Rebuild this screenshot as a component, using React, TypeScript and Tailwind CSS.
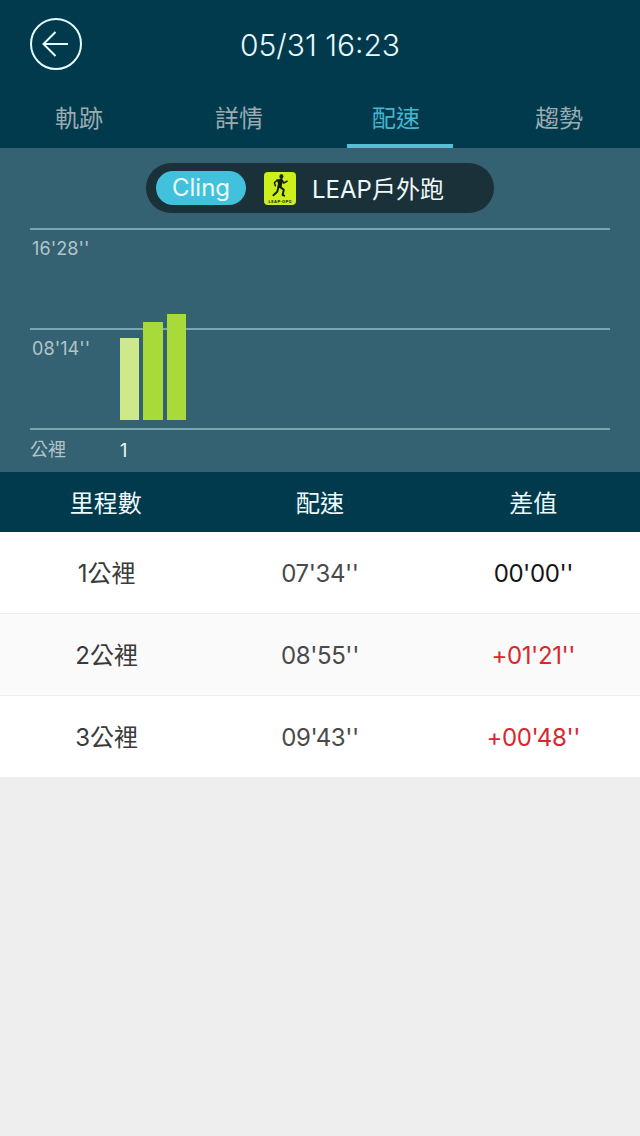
import React, { useState } from "react";

const tabs = [
  { id: "track", label: "軌跡", shift: "pr-0.5" },
  { id: "detail", label: "詳情", shift: "pr-0.5" },
  { id: "pace", label: "配速", shift: "pr-2" },
  { id: "trend", label: "趨勢", shift: "pr-0.5" },
];

const gridLabels = ["16'28''", "08'14''"];

const bars = [
  { height: 82, color: "bg-[#cfe98a]" },
  { height: 98, color: "bg-[#a8db3a]" },
  { height: 106, color: "bg-[#a8db3a]" },
];

const rows = [
  { distance: "1公裡", pace: "07'34''", diff: "00'00''" },
  { distance: "2公裡", pace: "08'55''", diff: "+01'21''" },
  { distance: "3公裡", pace: "09'43''", diff: "+00'48''" },
];

function BackIcon() {
  return (
    <svg width="52" height="52" viewBox="0 0 52 52" fill="none" stroke="#e6fbff" strokeWidth="2">
      <circle cx="26" cy="26" r="25" />
      <path d="M38 26H14M25.5 14L13.5 26l12 12" strokeWidth="2" />
    </svg>
  );
}

function LeapIcon() {
  return (
    <svg width="32" height="33" viewBox="0 0 32 33">
      <rect width="32" height="33" rx="4" fill="#cdf01c" />
      <ellipse cx="17.4" cy="4.4" rx="2" ry="2.5" fill="#15200a" />
      <path d="M12.6 7.4l5-.6 1.6 2-1.6 5.2.8 2.4-5.2-.8.8-4z" fill="#15200a" />
      <g
        fill="none"
        stroke="#15200a"
        strokeLinejoin="round"
        strokeLinecap="round"
      >
        <path d="M13 8.2l-2.6 2.6 1 3M18.2 8.4l1.6 2.6 3.4-1.8" strokeWidth="1.5" />
        <path d="M16.6 15.4l3.2 2.4-1.2 5.2 1.6.6M14.4 15.6l-1.2 4.2-3.8 3.4" strokeWidth="2" />
      </g>
      <text
        x="16"
        y="30.5"
        textAnchor="middle"
        textLength="23"
        className="fill-[#15200a] text-[4px] font-bold"
      >
        LEAP·OPG
      </text>
    </svg>
  );
}

export default function App() {
  const [activeTab, setActiveTab] = useState("pace");

  return (
    <div className="min-h-[1136px] w-[640px] bg-[#eeeeee] font-[Inter,'Noto_Sans_CJK_TC',sans-serif]">
      <header className="h-[148px] bg-[#023a4d]">
        <div className="grid h-[88px] grid-cols-[52px_1fr_52px] items-center px-[30px]">
          <button type="button" aria-label="返回">
            <BackIcon />
          </button>
          <h1 className="pt-0.5 text-center text-[30px] leading-9 font-light text-[#e9fafd]">
            05/31 16:23
          </h1>
        </div>

        <nav className="grid h-[60px] grid-cols-4">
          {tabs.map((tab) => (
            <button
              key={tab.id}
              type="button"
              onClick={() => setActiveTab(tab.id)}
              className={`flex flex-col items-center justify-between text-2xl ${
                activeTab === tab.id ? "text-[#45b4cc]" : "text-[#9aabb1]"
              }`}
            >
              <span className={`pt-[13px] leading-9 ${tab.shift}`}>{tab.label}</span>
              {activeTab === tab.id && <span className="h-1 w-[106px] bg-[#55bfd6]" />}
            </button>
          ))}
        </nav>
      </header>

      <section className="h-[324px] bg-[#346272] px-[30px] pt-[15px]">
        <div className="mx-auto flex h-[50px] w-[348px] items-center rounded-full bg-[#1b3139] pl-2.5 text-[#eefafc]">
          <span className="flex h-[34px] w-[90px] items-center justify-center rounded-full bg-[#41c1dc] text-2xl">
            Cling
          </span>
          <span className="ml-[18px]">
            <LeapIcon />
          </span>
          <span className="ml-4 pt-[3px] text-2xl">LEAP戶外跑</span>
        </div>

        {/* grid lines and bars share one cell */}
        <div className="mt-[15px] grid">
          <div className="col-start-1 row-start-1">
            {gridLabels.map((label) => (
              <div
                key={label}
                className="h-[100px] border-t-2 border-[#7ba5b1] pt-[7px] pl-0.5 text-lg leading-6 tracking-[0.1px] text-[#b3c4c9]"
              >
                {label}
              </div>
            ))}
          </div>
          <div className="col-start-1 row-start-1 flex items-end gap-1 pb-2 pl-[90px]">
            {bars.map((bar, i) => (
              <div key={i} className={`w-[19.33px] ${bar.color}`} style={{ height: bar.height }} />
            ))}
          </div>
        </div>
        <div className="flex border-t-2 border-[#7ba5b1] pt-1.5 text-lg leading-7">
          <span className="w-[90px] text-[#b3c4c9]">公裡</span>
          <span className="pt-px text-[#eefafc]">1</span>
        </div>
      </section>

      <section className="text-center text-2xl">
        <div className="grid h-[60px] grid-cols-3 items-center bg-[#023a4d] pt-[3px] text-[#eefafc]">
          <span className="pr-0.5">里程數</span>
          <span>配速</span>
          <span>差值</span>
        </div>
        {rows.map((row) => (
          <div
            key={row.distance}
            className="grid h-[82px] grid-cols-3 items-center border-b border-[#eeeeee] even:bg-white odd:bg-[#fafafa]"
          >
            <span className="pt-0.5 text-[#3a3a3a]">{row.distance}</span>
            <span className="pt-0.5 tracking-[-0.4px] text-[#4a4a4a]">{row.pace}</span>
            <span
              className={`pt-0.5 tracking-[-0.4px] ${
                row.diff.startsWith("+") ? "text-[#d9272d]" : "text-[#151515]"
              }`}
            >
              {row.diff}
            </span>
          </div>
        ))}
      </section>
    </div>
  );
}
